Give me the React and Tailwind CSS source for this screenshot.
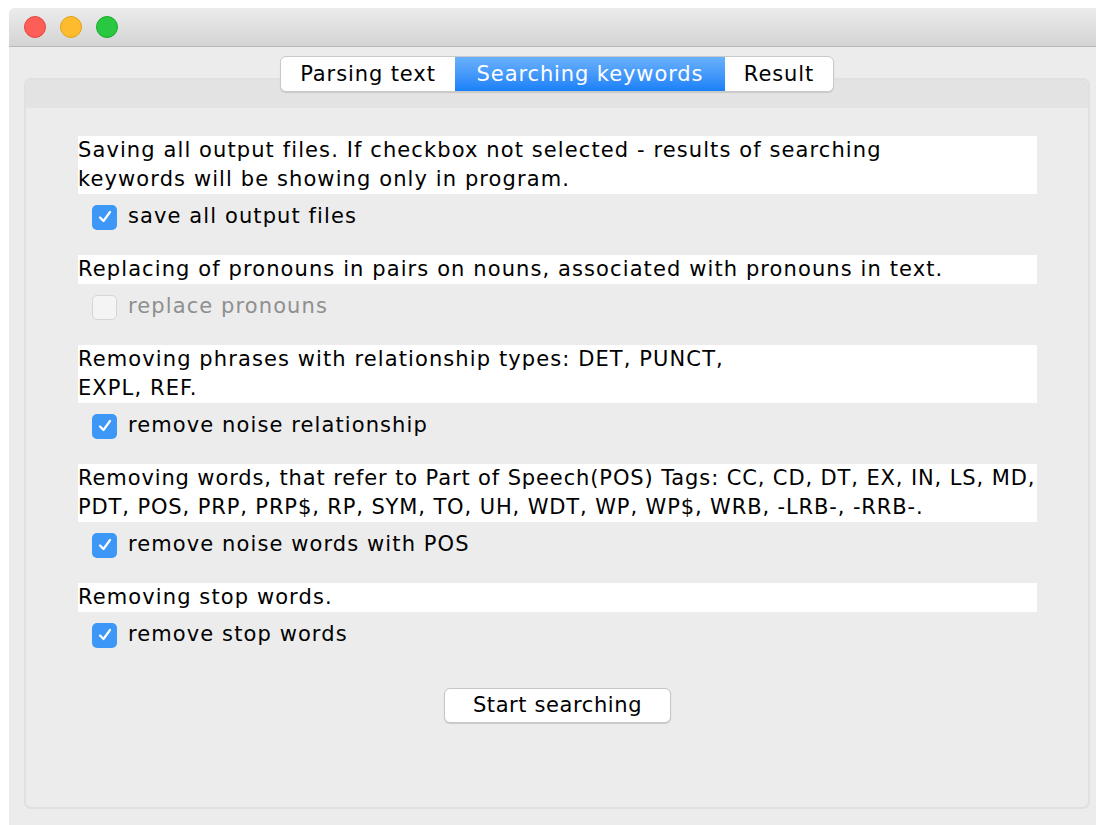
import { useState } from 'react';

const sections = [
  {
    lines: ['Saving all output files. If checkbox not selected - results of searching', 'keywords will be showing only in program.'],
    label: 'save all output files',
    checked: true,
  },
  {
    lines: ['Replacing of pronouns in pairs on nouns, associated with pronouns in text.'],
    label: 'replace pronouns',
    checked: false,
    disabled: true,
  },
  {
    lines: ['Removing phrases with relationship types: DET, PUNCT,', 'EXPL, REF.'],
    label: 'remove noise relationship',
    checked: true,
  },
  {
    lines: [
      'Removing words, that refer to Part of Speech(POS) Tags: CC, CD, DT, EX, IN, LS, MD,',
      'PDT, POS, PRP, PRP$, RP, SYM, TO, UH, WDT, WP, WP$, WRB, -LRB-, -RRB-.',
    ],
    label: 'remove noise words with POS',
    checked: true,
    tight: true,
  },
  {
    lines: ['Removing stop words.'],
    label: 'remove stop words',
    checked: true,
  },
];

const tabs = [
  { name: 'Parsing text', width: 'w-[174px]' },
  { name: 'Searching keywords', width: 'w-[270px]' },
  { name: 'Result', width: 'w-[108px]' },
];

const CheckBox = ({ checked, disabled, label, onToggle }) => (
  <button
    type="button"
    onClick={disabled ? undefined : onToggle}
    className="flex items-center h-[26px] ml-[14px] mt-[10px] mb-[25px] gap-[11px] text-left"
  >
    {checked ? (
      <span className="w-[25px] h-[25px] rounded-[5px] bg-[#3c97f7] flex items-center justify-center">
        <svg width="16" height="16" viewBox="0 0 16 16" fill="none">
          <path d="M3 8.5 L6.5 12 L13 3" stroke="white" strokeWidth="2.2" strokeLinecap="round" strokeLinejoin="round" />
        </svg>
      </span>
    ) : (
      <span className="w-[25px] h-[25px] rounded-[5px] bg-[#f4f4f4] border border-[#d6d6d6]" />
    )}
    <span className={disabled ? 'text-[#8f8f8f]' : 'text-black'}>{label}</span>
  </button>
);

export default function App() {
  const [activeTab, setActiveTab] = useState(1);
  const [checks, setChecks] = useState(sections.map((s) => s.checked));

  return (
    <div className="min-h-screen bg-white pl-[9px] pt-[8px] font-['DejaVu_Sans',sans-serif] text-[21px] tracking-[1.1px]">
      <div className="h-[817px] rounded-tl-[6px] bg-[#ececec] flex flex-col overflow-hidden">
        {/* title bar */}
        <div className="h-[39px] shrink-0 flex items-center gap-[14px] pl-[15px] bg-gradient-to-b from-[#ececec] to-[#d4d4d4] border-b border-[#b8b8b8]">
          <span className="w-[22px] h-[22px] rounded-full bg-[#fd5e57] border border-[#e2463f]" />
          <span className="w-[22px] h-[22px] rounded-full bg-[#febb2e] border border-[#e1a116]" />
          <span className="w-[22px] h-[22px] rounded-full bg-[#29c840] border border-[#13ab2a]" />
        </div>

        {/* tabbed pane */}
        <div className="flex flex-col pt-[9px] ml-[15px] mr-[6px]">
          <div className="relative z-10 flex justify-center">
            <div className="flex h-[36px] rounded-[6px] bg-white border border-[#c9c9c9] shadow-[0_1px_1px_rgba(0,0,0,0.12)] overflow-hidden">
              {tabs.map((tab, i) => (
                <button
                  key={tab.name}
                  type="button"
                  onClick={() => setActiveTab(i)}
                  className={`${tab.width} flex items-center justify-center pt-[2px] text-[21px] tracking-[0.9px] ${
                    activeTab === i
                      ? 'bg-gradient-to-b from-[#69b1fb] to-[#1680f8] text-white'
                      : 'text-black'
                  }`}
                >
                  {tab.name}
                </button>
              ))}
            </div>
          </div>

          <div className="-mt-[14px] h-[731px] rounded-[7px] border-2 border-[#e0e0e0] bg-[#ececec] flex flex-col">
            <div className="h-[28px] shrink-0 bg-[#e3e3e3] rounded-t-[6px]" />
            <div className="pt-[28px] pl-[52px] pr-[51px] flex flex-col">
              {sections.map((s, i) => (
                <div key={i} className="flex flex-col">
                  <div
                    className={`bg-white leading-[29px] text-black whitespace-nowrap ${
                      s.tight ? 'tracking-[0.88px]' : ''
                    }`}
                  >
                    {s.lines.map((line) => (
                      <div key={line}>{line}</div>
                    ))}
                  </div>
                  <CheckBox
                    checked={checks[i]}
                    disabled={s.disabled}
                    label={s.label}
                    onToggle={() => setChecks(checks.map((c, j) => (j === i ? !c : c)))}
                  />
                </div>
              ))}
              <div className="flex justify-center mt-[15px]">
                <button
                  type="button"
                  className="w-[227px] h-[35px] rounded-[6px] bg-white border border-[#c6c6c6] shadow-[0_1px_1px_rgba(0,0,0,0.15)] text-[21px] tracking-[0.6px] text-black"
                >
                  Start searching
                </button>
              </div>
            </div>
          </div>
        </div>
      </div>
    </div>
  );
}
